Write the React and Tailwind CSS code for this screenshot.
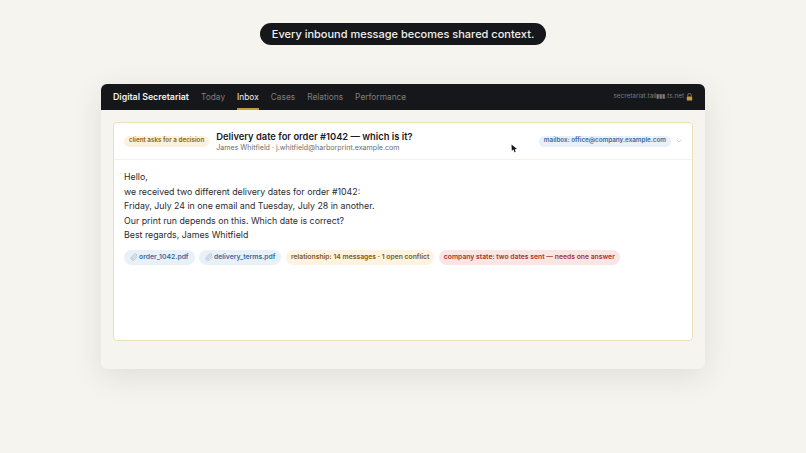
import React from 'react'
import { ChevronDown, Paperclip } from 'lucide-react'

const tabs = ['Today', 'Inbox', 'Cases', 'Relations', 'Performance']

const body = [
  'Hello,',
  'we received two different delivery dates for order #1042:',
  'Friday, July 24 in one email and Tuesday, July 28 in another.',
  'Our print run depends on this. Which date is correct?',
  'Best regards, James Whitfield',
]

const Attachment = ({ name }) => (
  <span className="flex h-[15px] items-center gap-[1px] rounded-full bg-[#e8f0f8] px-[6px] text-[6.8px] font-semibold leading-none text-[#3a6a9e]">
    <Paperclip className="h-[8px] w-[8px] text-[#8fa6c0]" strokeWidth={1.5} />
    {name}
  </span>
)

export default function App() {
  return (
    <div className="flex h-[453px] w-[806px] flex-col items-center overflow-hidden bg-[#f6f4ef] pt-[23px] font-['Inter',sans-serif]">
      <div className="flex h-[22px] w-[286px] items-center justify-center rounded-full bg-[#16171b] text-[11px] font-medium text-[#f0efeb]">
        Every inbound message becomes shared context.
      </div>

      <div className="mt-[39px] w-[604px] overflow-hidden rounded-[6px] bg-[#f6f4ef] shadow-[0_8px_30px_rgba(40,35,20,0.10)]">
        <div className="flex h-[26px] items-center justify-between bg-[#16171b] px-[12px]">
          <div className="flex h-full items-center">
            <span className="mr-[12px] text-[8.8px] font-semibold text-[#f3f2ee]">Digital Secretariat</span>
            <div className="flex h-full gap-[12px]">
              {tabs.map((t) =>
                t === 'Inbox' ? (
                  <span key={t} className="flex h-full items-center border-b-2 border-[#c49a3a] pt-[2px] text-[8.35px] text-[#f0efeb]">
                    {t}
                  </span>
                ) : (
                  <span key={t} className="flex h-full items-center text-[8.35px] text-[#7f7f7c]">
                    {t}
                  </span>
                )
              )}
            </div>
          </div>
          <div className="flex items-center gap-[2px] text-[6.4px] text-[#7c7c79]">
            <span>secretariat.tail▮▮▮.ts.net</span>
            <svg width="7" height="8" viewBox="0 0 7 8">
              <path d="M1.7 3.5V2.3a1.8 1.8 0 0 1 3.6 0v1.2" fill="none" stroke="#9a8a68" strokeWidth="0.8" />
              <rect x="0.8" y="3.4" width="5.4" height="4.2" rx="0.6" fill="#c49a3a" />
            </svg>
          </div>
        </div>

        <div className="px-[12px] pb-[28px] pt-[12px]">
          <div className="relative h-[219px] rounded-[4px] border border-[#eedfb8] bg-white">
            <div className="flex h-[37px] items-center border-b border-[#f3f1ec] pl-[10px] pr-[9px]">
              <span className="flex h-[11px] items-center rounded-full bg-[#fcf1dc] px-[5px] text-[6.3px] font-semibold text-[#8a6414]">
                client asks for a decision
              </span>
              <div className="ml-[7px] flex flex-col">
                <span className="text-[9.35px] font-semibold leading-[13px] text-[#1a1b1f]">
                  Delivery date for order #1042 — which is it?
                </span>
                <span className="text-[7.1px] leading-[10px] text-[#6e6e6b]">
                  James Whitfield · j.whitfield@harborprint.example.com
                </span>
              </div>
              <span className="ml-auto flex h-[11px] items-center rounded-full bg-[#e8f0f8] px-[5px] text-[6.3px] font-semibold text-[#3a6a9e]">
                mailbox: office@company.example.com
              </span>
              <ChevronDown className="ml-[4px] h-[8px] w-[8px] text-[#9a9a97]" strokeWidth={1.5} />
            </div>

            <div className="px-[10px] pt-[10px]">
              <div className="text-[8.8px] leading-[14.5px] text-[#2b2c30]">
                {body.map((line) => (
                  <div key={line}>{line}</div>
                ))}
              </div>
              <div className="mt-[7px] flex gap-[4.5px]">
                <Attachment name="order_1042.pdf" />
                <Attachment name="delivery_terms.pdf" />
                <span className="flex h-[15px] items-center rounded-full bg-[#fdf3e0] px-[5px] text-[6.8px] font-semibold leading-none text-[#7d5a10]">
                  relationship: 14 messages · 1 open conflict
                </span>
                <span className="flex h-[15px] items-center rounded-full bg-[#f9e5e3] px-[5px] text-[6.8px] font-semibold leading-none text-[#a8322c]">
                  company state: two dates sent — needs one answer
                </span>
              </div>
            </div>

            <svg className="absolute left-[397px] top-[21px]" width="7" height="9" viewBox="0 0 7 9">
              <path d="M0.5 0.5 L6 5 L3.8 5.2 L4.6 8 L3.4 8.3 L2.6 5.6 L0.8 6.8 Z" fill="#16171b" />
            </svg>
          </div>
        </div>
      </div>
    </div>
  )
}
